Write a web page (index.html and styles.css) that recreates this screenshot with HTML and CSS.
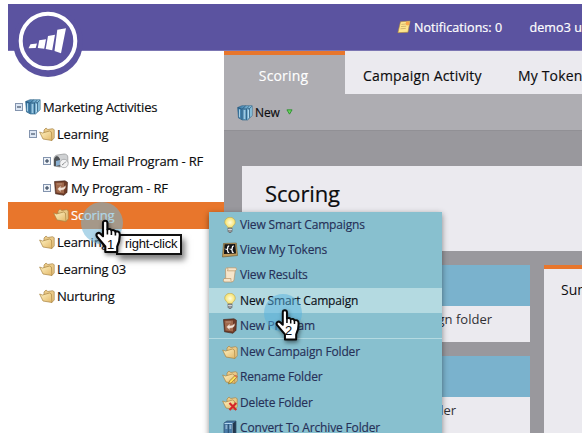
FILE: index.html
```html
<!DOCTYPE html>
<html lang="en">
<head>
<meta charset="utf-8">
<title>Marketing Activities</title>
<link rel="stylesheet" href="styles.css">
</head>
<body>
<svg class="defs" width="0" height="0">
  <defs>
    <linearGradient id="gold" x1="0" y1="0" x2="1" y2="1"><stop offset="0" stop-color="#fff3c4"/><stop offset="1" stop-color="#e3b868"/></linearGradient>
    <linearGradient id="steel"><stop offset="0" stop-color="#2f6f9e"/><stop offset="1" stop-color="#9bd0ea"/></linearGradient>
    <radialGradient id="glow"><stop offset="0" stop-color="#fffde0"/><stop offset="1" stop-color="#f6e168"/></radialGradient>
    <symbol id="folder" viewBox="0 0 16 16"><path d="M5 10V4L7 2l1.8 1.5 4.7-.8 1.7 1V12l-2.4 2.5" fill="#eac987" stroke="#a8864a" stroke-width=".7"/><path d="M.6 6 3.5 7l7-2 2 1.3.5 8.2L4 13z" fill="url(#gold)" stroke="#a8833f" stroke-width=".7" stroke-linejoin="round"/></symbol>
    <symbol id="books" viewBox="0 0 16 16"><path d="M.6 2.5 5 .7h10.2v10L10.5 15H5.5L1.5 13z" fill="url(#steel)" stroke="#2d6284" stroke-width=".6"/><path d="M.8 2.7 5 4.2v10.5M5 4.2 8.5 1M6.2 4h3.3v10.8M9.5 4l2.6-2.8M10.8 3.7h1.8v9M12.6 3.7l2-2.4" fill="none" stroke="#1c4a6e" stroke-width=".7"/><path d="M7.3 5V14M11.5 5v8M2.5 4.3v8" stroke="#c4e3f2" stroke-width=".8"/></symbol>
    <symbol id="bulb" viewBox="0 0 16 16"><path d="M5.8 10.8C5.8 8.8 2.7 8 2.7 5.2a5.3 5 0 0 1 10.6 0c0 2.8-3.1 3.6-3.1 5.6z" fill="url(#glow)" stroke="#b8a458" stroke-width=".6"/><path d="M6 11h4v3.3L9 15.5H7l-1-1.2z" fill="#98999b" stroke="#56595c" stroke-width=".6"/><path d="M6 12.5h4" stroke="#eee" stroke-width=".7"/></symbol>
    <symbol id="program" viewBox="0 0 16 16"><path d="M1.5 1.5 12 .8l2.5 1.5-.5 10-3 3-8.5-1.5z" fill="#6d3b27" stroke="#3f241b" stroke-width=".6"/><path d="m2.5 2.8 8.5-.2.1 11-7.6-1z" fill="#a0694c"/><path d="M4 4h5M7.5 11.5 4.7 9l2.8-2.7v1.6c2.2 0 3.6-.5 5-2.2.2 3.2-1.7 4.5-5 4.3z" fill="#f3e5da" stroke="#dbc5b7" stroke-width=".4"/></symbol>
    <symbol id="mail" viewBox="0 0 16 16"><path d="M1 13V6c0-2 1.3-3.7 3-3.9L11 1c2 0 3.8 1 3.8 3v6L7 14z" fill="#cfd1d3" stroke="#909294" stroke-width=".7"/><path d="M1 13V6q2.8-6 6 0v7.5z" fill="#505356"/><path d="M3 8 7 7v5l-4 1z" fill="#8ab0d2"/><circle cx="11" cy="10.5" r="4.2" fill="#f3f3f4" stroke="#97999c" stroke-width=".7"/><path d="m9 12 2-1.5 2-2" fill="none" stroke="#898b8e"/></symbol>
    <symbol id="tokens" viewBox="0 0 16 16"><path d="M1.5 1.5 14.3 1l1.2 12.5-15 1.5z" fill="#c29c5b" stroke="#6e5428" stroke-width=".6"/><path d="m2.5 2.3 10.8-.2.7 9.4-12 .6z" fill="#121417"/><path d="M7.2 4Q5.7 4 5.7 6T4.5 7.3Q5.7 7.3 5.7 9t1.5 1.3M11.7 4Q10.2 4 10.2 6T9 7.3Q10.2 7.3 10.2 9t1.5 1.3" fill="none" stroke="#fff" stroke-width="1.3"/></symbol>
    <symbol id="scroll" viewBox="0 0 16 16"><path d="M3.5 2Q4 .8 5.3.8H14q1.5 2-.8 3L12 13q-.5 2-2.3 2H2Q.5 13 2 11.5h1.7z" fill="#f6e5ca" stroke="#b3946c" stroke-width=".7"/><path d="M2 11.5h7q-.8 2 1 3.3M5.3.8q1.5 1 .1 3h7.8" fill="none" stroke="#c2a074" stroke-width=".8"/></symbol>
    <symbol id="rename" viewBox="0 0 16 16"><use href="#folder"/><path d="m6.5 15 1-3 6-6 1.8 1.8-5.9 6z" fill="#ffe157" stroke="#8c6525" stroke-width=".7"/><path d="m12.5 6.8 1-1 1.8 1.9-1 1z" fill="#db6757"/></symbol>
    <symbol id="delete" viewBox="0 0 16 16"><use href="#folder"/><path d="m7.5 8 6.8 7M14.3 8l-6.8 7" stroke="#d4242b" stroke-width="2.1"/></symbol>
    <symbol id="archive" viewBox="0 0 16 16"><path d="m2 3 3-2h9v12l-3.5 2.5H2z" fill="#4a7ca8" stroke="#294764" stroke-width=".7"/><path d="M2.5 3.5h8V15" fill="none" stroke="#b4d7ef"/><path d="m10.5 3.4 3.3-2.2V13l-3.3 2.2z" fill="#23384e"/><path d="M6.3 4v11" stroke="#274d70"/><path d="M3.5 6h1.8M7.5 6h1.8M3.5 8h1.8M7.5 8h1.8" stroke="#d4e9f6"/></symbol>
    <symbol id="note" viewBox="0 0 16 16"><path d="m4 2 11-.8-2.5 12.8-11.5.5z" fill="#ffe68e" stroke="#b08a3c" stroke-width=".7"/><path d="m5 5 5-.4M4.5 7.5l6-.4M4 10l6-.4" stroke="#c0a264" stroke-width=".8"/><circle cx="12" cy="4" r="2.2" fill="#f9a74c"/></symbol>
    <symbol id="plus" viewBox="0 0 8 8"><rect x=".5" y=".5" width="7" height="7" fill="#eef2f7" stroke="#8394ae"/><path d="M2 4h4M4 2v4" stroke="#24364f"/></symbol>
    <symbol id="minus" viewBox="0 0 8 8"><rect x=".5" y=".5" width="7" height="7" fill="#dce6f3" stroke="#8394ae"/><path d="M2 4h4" stroke="#24364f"/></symbol>
    <symbol id="hand" viewBox="0 0 26 34"><path d="M8 3.2C8 .6 12.2.6 12.4 3.2V10c1.5-1 3.6-.6 4 .9 1.5-.9 3.5-.2 3.9 1.3 2-1 4.3.2 4.4 2.3.3 4.5-.5 8.5-2.5 12.5v5.5H10.3V27L2 17.2c-1.7-2.8 1.3-5 3.5-2.9L8 16.7z" fill="#fff" stroke="#080808" stroke-width="2.1" stroke-linejoin="round"/><path d="M12.4 9.5v5.5M16.4 11v4.5M20.4 12.5V16" stroke="#080808" stroke-width="1.6"/></symbol>
  </defs>
</svg>
<div class="app">
  <header class="topbar">
    <svg class="note" width="14" height="14"><use href="#note"/></svg>
    <span class="notifications">Notifications: 0</span>
    <span class="user">demo3 u</span>
  </header>
  <svg class="logo" viewBox="0 0 70 70"><circle cx="35" cy="35" r="35" fill="#5b53a0"/><circle cx="35" cy="34" r="27.3" fill="none" stroke="#fff" stroke-width="4"/><path d="m17.5 37.3 6.5-.9-1.3 4.6-7.2.3zM26.2 33.2l6.8-1-1.8 9.6-6.4-.7zM35 29l7-1.2-2.8 15.5-6.5-1.3zM44.3 22.8l8.7-1.6-5 25-6.5-2.3z" fill="#fff"/></svg>
  <div class="body">
    <nav class="tree">
      <div class="node"><svg class="toggle"><use href="#minus"/></svg><svg class="icon"><use href="#books"/></svg><span>Marketing Activities</span></div>
      <div class="node level1"><svg class="toggle"><use href="#minus"/></svg><svg class="icon"><use href="#folder"/></svg><span>Learning</span></div>
      <div class="node level2"><svg class="toggle"><use href="#plus"/></svg><svg class="icon"><use href="#mail"/></svg><span>My Email Program - RF</span></div>
      <div class="node level2"><svg class="toggle"><use href="#plus"/></svg><svg class="icon"><use href="#program"/></svg><span>My Program - RF</span></div>
      <div class="node leaf2 selected"><svg class="icon"><use href="#folder"/></svg><span>Scoring</span></div>
      <div class="node leaf1"><svg class="icon"><use href="#folder"/></svg><span>Learning 02</span></div>
      <div class="node leaf1"><svg class="icon"><use href="#folder"/></svg><span>Learning 03</span></div>
      <div class="node leaf1"><svg class="icon"><use href="#folder"/></svg><span>Nurturing</span></div>
    </nav>
    <main class="main">
      <div class="tabs"><div class="tab active">Scoring</div><div class="tab">Campaign Activity</div><div class="tab last">My Tokens</div></div>
      <div class="toolbar"><svg class="icon"><use href="#books"/></svg><span>New</span><svg class="arrow" viewBox="0 0 8 7"><path d="M1 1h6L4 6z" fill="#6bd35c" stroke="#278b2c"/></svg></div>
      <div class="content">
        <h1 class="title">Scoring</h1>
        <div class="columns">
          <div class="stack">
            <section class="card"><div class="cardhead"></div><p class="first">campaign folder</p></section>
            <section class="card"><div class="cardhead"></div><p class="second">folder</p></section>
          </div>
          <aside class="summary">Summary</aside>
        </div>
      </div>
    </main>
  </div>
  <div class="menu">
    <div class="item"><svg class="icon"><use href="#bulb"/></svg><span>View Smart Campaigns</span></div>
    <div class="item"><svg class="icon"><use href="#tokens"/></svg><span>View My Tokens</span></div>
    <div class="item"><svg class="icon"><use href="#scroll"/></svg><span>View Results</span></div>
    <div class="item hover"><svg class="icon"><use href="#bulb"/></svg><span>New Smart Campaign</span></div>
    <div class="item"><svg class="icon"><use href="#program"/></svg><span>New Program</span></div>
    <div class="rule"></div>
    <div class="item"><svg class="icon"><use href="#folder"/></svg><span>New Campaign Folder</span></div>
    <div class="item"><svg class="icon"><use href="#rename"/></svg><span>Rename Folder</span></div>
    <div class="item"><svg class="icon"><use href="#delete"/></svg><span>Delete Folder</span></div>
    <div class="item"><svg class="icon"><use href="#archive"/></svg><span>Convert To Archive Folder</span></div>
  </div>
  <div class="halo one"></div>
  <div class="tip">right-click</div>
  <svg class="hand one"><use href="#hand"/></svg><span class="step one">1</span>
  <div class="halo two"></div>
  <svg class="hand two"><use href="#hand"/></svg><span class="step two">2</span>
</div>
</body>
</html>
```
FILE: styles.css
```css
* { box-sizing: border-box; }
body { margin: 0; padding: 4px 5px 5px 8px; background: #fff; font: 13px/20px "Open Sans", sans-serif; color: #0c0c0e; overflow: hidden; }
span, p, h1, .tab, .summary { white-space: nowrap; }
.defs { position: absolute; }
.app { position: relative; width: 574px; height: 429px; overflow: hidden; display: flex; flex-direction: column; }
.topbar { height: 47px; flex: none; background: #5b53a0; border-bottom: 1px solid #7c76b3; display: flex; align-items: center; padding: 1px 0 0 389px; color: #fff; font-size: 12.5px; -webkit-text-stroke: .2px #fff; }
.note { margin: -2px 3px 0 0; flex: none; }
.notifications { width: 117px; letter-spacing: .06px; }
.user { letter-spacing: .1px; }
.logo { position: absolute; left: 5px; top: 3px; width: 70px; height: 70px; }
.body { display: flex; flex: 1; min-height: 0; }
.tree { width: 216px; flex: none; padding-top: 43px; letter-spacing: -.2px; -webkit-text-stroke: .15px currentColor; }
.node { height: 27px; display: flex; align-items: center; padding: 0 0 2px 7px; }
.toggle { width: 8px; height: 8px; margin-right: 2px; flex: none; }
.icon { width: 16px; height: 16px; margin-right: 2px; flex: none; }
.level1 { padding-left: 21px; }
.level2 { padding-left: 35px; }
.leaf1 { padding-left: 31px; }
.leaf2 { padding-left: 45px; }
.selected { background: #e8762c; color: #fff; }
.main { flex: 1; min-width: 0; display: flex; flex-direction: column; overflow: hidden; background: #aeadb2; }
.tabs { display: flex; height: 43px; flex: none; font-size: 14px; letter-spacing: .16px; -webkit-text-stroke: .15px currentColor; }
.tab { background: #ebeaef; padding: 15px 18px 0; width: 155px; flex: none; }
.tab.active { width: 121px; background: none; border-top: 4px solid #e8762c; color: #fff; padding: 11px 2px 0 0; text-align: center; }
.toolbar { height: 36px; flex: none; display: flex; align-items: center; padding: 2px 0 0 13px; font-size: 12px; letter-spacing: -.1px; -webkit-text-stroke: .15px currentColor; }
.arrow { width: 7px; height: 6px; margin-left: 6px; margin-top: -3px; }
.content { flex: 1; background: #99989d; border-top: 1px solid #919095; padding: 35px 0 0 18px; }
.title { margin: 0; height: 85px; padding: 12px 0 0 23px; background: #ebeaef; font-size: 22px; line-height: 30px; font-weight: 400; letter-spacing: -.15px; -webkit-text-stroke: .2px currentColor; }
.columns { display: flex; gap: 14px; margin-top: 14px; }
.stack { width: 288px; flex: none; display: flex; flex-direction: column; gap: 14px; }
.card { height: 77px; background: #ebeaef; color: #303035; }
.cardhead { height: 41px; background: #7ab2cd; }
.card p { margin: 3px 0 0; text-align: right; }
.first { padding-right: 38px; }
.second { padding-right: 74px; }
.summary { width: 60px; flex: none; height: 175px; background: #ebeaef; border-top: 4px solid #e8762c; padding: 11px 0 0 17px; font-size: 14px; }
.menu { position: absolute; left: 201px; top: 208px; width: 233px; height: 230px; background: #88c0cf; box-shadow: 0 2px 6px rgba(0,0,0,.45); color: #263058; font-size: 12px; letter-spacing: -.16px; -webkit-text-stroke: .15px currentColor; }
.item { height: 25.3px; display: flex; align-items: center; padding-left: 13px; }
.hover { background: #b4dae1; color: #0c1018; }
.rule { height: 1px; background: #b4dae1; }
.halo { position: absolute; border-radius: 50%; background: rgba(85,178,224,.5); width: 38px; height: 38px; }
.halo.one { left: 73px; top: 198px; width: 42px; height: 42px; background: rgba(110,180,215,.55); }
.halo.two { left: 256px; top: 290px; }
.hand { position: absolute; filter: drop-shadow(1px 2px 2px rgba(0,0,0,.5)); }
.hand.one { left: 87px; top: 215px; width: 26px; height: 35px; }
.hand.two { left: 267px; top: 305px; width: 25px; height: 32px; }
.tip { position: absolute; left: 108px; top: 230px; width: 66px; height: 21px; border: 2px solid #111; background: #fff; box-shadow: 3px 5px 6px rgba(0,0,0,.5); font: 13px/16px "Liberation Sans", sans-serif; letter-spacing: -.25px; padding-left: 7px; white-space: nowrap; }
.step { position: absolute; font: 12px/14px "Liberation Sans", sans-serif; }
.step.one { left: 99px; top: 234px; font-size: 13px; }
.step.two { left: 277px; top: 320px; font-size: 13px; }
```
